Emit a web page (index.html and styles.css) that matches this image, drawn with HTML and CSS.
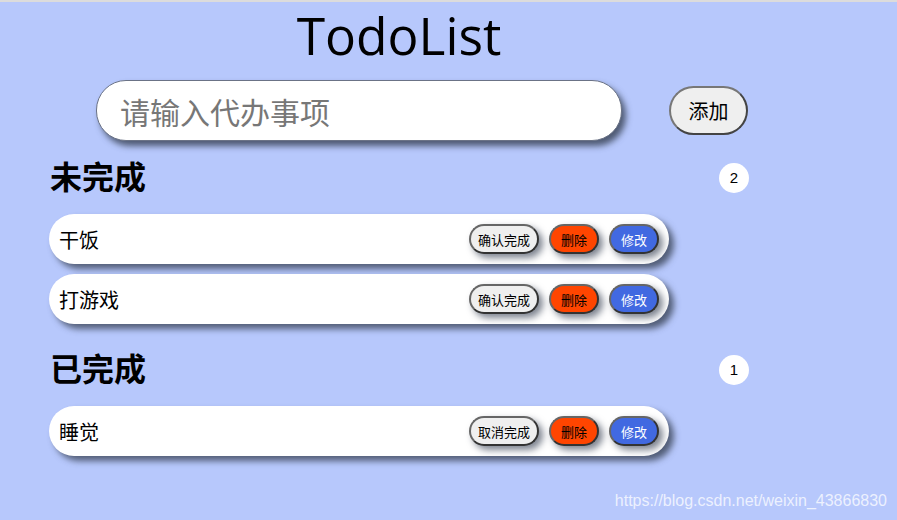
FILE: index.html
```html
<!DOCTYPE html>
<html lang="zh">
<head>
<meta charset="utf-8">
<title>TodoList</title>
<link rel="stylesheet" href="styles.css">
</head>
<body>
<div class="topbar"></div>
<main class="app">
  <h1 class="title">TodoList</h1>
  <div class="add-row">
    <input class="add-input" type="text" placeholder="请输入代办事项">
    <button class="add-btn">添加</button>
  </div>

  <section class="group">
    <div class="group-head">
      <h2 class="group-title">未完成</h2>
      <span class="badge">2</span>
    </div>
    <ul class="list">
      <li class="item">
        <span class="item-text">干饭</span>
        <div class="actions">
          <button class="btn btn-done">确认完成</button>
          <button class="btn btn-del">删除</button>
          <button class="btn btn-edit">修改</button>
        </div>
      </li>
      <li class="item">
        <span class="item-text">打游戏</span>
        <div class="actions">
          <button class="btn btn-done">确认完成</button>
          <button class="btn btn-del">删除</button>
          <button class="btn btn-edit">修改</button>
        </div>
      </li>
    </ul>
  </section>

  <section class="group">
    <div class="group-head">
      <h2 class="group-title">已完成</h2>
      <span class="badge">1</span>
    </div>
    <ul class="list">
      <li class="item">
        <span class="item-text">睡觉</span>
        <div class="actions">
          <button class="btn btn-done">取消完成</button>
          <button class="btn btn-del">删除</button>
          <button class="btn btn-edit">修改</button>
        </div>
      </li>
    </ul>
  </section>
</main>
<div class="watermark">https://blog.csdn.net/weixin_43866830</div>
</body>
</html>
```

FILE: styles.css
```css
* { box-sizing: border-box; }

html, body {
  margin: 0;
  padding: 0;
  height: 100%;
}

body {
  background: #b7c8fc;
  font-family: "Noto Sans CJK SC", "Open Sans", sans-serif;
  color: #000;
  overflow: hidden;
  position: relative;
}

.topbar {
  height: 2px;
  background: #dcdcdc;
}

.app {
  width: 700px;
  margin-left: 49px;
}

.title {
  margin: 0;
  height: 78px;
  padding: 0;
  text-align: center;
  font-family: "Open Sans", "Noto Sans", sans-serif;
  font-weight: 400;
  font-size: 51.5px;
  line-height: 66px;
}

.add-row {
  display: flex;
  align-items: center;
  padding-left: 47px;
  height: 61px;
}

.add-input {
  width: 526px;
  height: 61px;
  border: 1px solid #6b7386;
  border-radius: 30px;
  background: #fff;
  padding: 0 0 0 23px;
  font-family: "Noto Sans CJK SC", sans-serif;
  font-size: 30px;
  outline: none;
  box-shadow: 4px 5px 6px rgba(60, 70, 90, 0.85);
}

.add-input::placeholder {
  color: #777;
}

.add-btn {
  margin-left: 47px;
  width: 79px;
  height: 49px;
  border: 2px solid #444;
  border-top-color: #777;
  border-left-color: #777;
  border-radius: 25px;
  background: #efefef;
  font-family: "Noto Sans CJK SC", sans-serif;
  font-size: 20px;
  color: #000;
  padding: 0;
}

.group-head {
  display: flex;
  justify-content: space-between;
  align-items: center;
  height: 73px;
  padding-left: 1px;
}

.group-title {
  margin: 0 0 6px;
  font-size: 32px;
  font-weight: 700;
  line-height: 1;
}

.badge {
  width: 30px;
  height: 30px;
  border-radius: 50%;
  background: #fff;
  display: flex;
  align-items: center;
  justify-content: center;
  font-family: "Liberation Sans", sans-serif;
  font-size: 15px;
}

.list {
  list-style: none;
  margin: 0;
  padding: 0;
  display: flex;
  flex-direction: column;
  gap: 10px;
}

.item {
  width: 620px;
  height: 50px;
  border-radius: 25px;
  background: #fff;
  display: flex;
  align-items: center;
  justify-content: space-between;
  padding: 0 10px 0 10px;
  box-shadow: 5px 5px 6px rgba(60, 70, 90, 0.8);
}

.item-text {
  font-size: 20px;
}

.actions {
  display: flex;
  gap: 10px;
}

.btn {
  height: 30px;
  width: 50px;
  border: 2px solid #333;
  border-top-color: #666;
  border-left-color: #666;
  border-radius: 15px;
  font-family: "Noto Sans CJK SC", sans-serif;
  font-size: 13px;
  padding: 0;
  box-shadow: 4px 4px 7px rgba(40, 50, 70, 0.6);
  color: #000;
}

.btn-done {
  width: 70px;
  background: #efefef;
}

.btn-del {
  background: #ff4500;
}

.btn-edit {
  background: #4169e1;
  color: #fff;
}

.group + .group .group-head {
  height: 82px;
  padding-top: 9px;
}

.watermark {
  position: absolute;
  right: 10px;
  bottom: 10px;
  font-family: "Liberation Sans", sans-serif;
  font-size: 16px;
  color: rgba(255, 255, 255, 0.75);
}
```
